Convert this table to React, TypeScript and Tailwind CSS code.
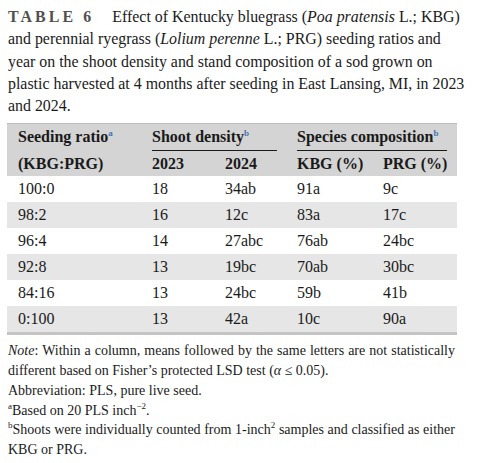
import React from "react";

const rows = [
  ["100:0", "18", "34ab", "91a", "9c"],
  ["98:2", "16", "12c", "83a", "17c"],
  ["96:4", "14", "27abc", "76ab", "24bc"],
  ["92:8", "13", "19bc", "70ab", "30bc"],
  ["84:16", "13", "24bc", "59b", "41b"],
  ["0:100", "13", "42a", "10c", "90a"],
];

const sup = "text-[9px] leading-none align-[6px]";

export default function App() {
  return (
    <div
      className="w-[477px] h-[463px] bg-white text-[#1a1a1a] overflow-hidden"
      style={{ fontFamily: '"Liberation Serif", "Times New Roman", serif' }}
    >
      <div className="pl-[8px] pt-[6px] text-[15.9px] leading-[22.3px] whitespace-nowrap">
        <div>
          <span className="font-bold tracking-[3.1px] text-[#505050]">TABLE 6</span>
          <span className="inline-block w-[18px]"></span>
          Effect of Kentucky bluegrass (<i>Poa pratensis</i> L.; KBG)
        </div>
        <div>
          and perennial ryegrass (<i>Lolium perenne</i> L.; PRG) seeding ratios and
        </div>
        <div>year on the shoot density and stand composition of a sod grown on</div>
        <div>plastic harvested at 4 months after seeding in East Lansing, MI, in 2023</div>
        <div>and 2024.</div>
      </div>

      <div className="ml-[7px] mt-[6px] w-[450px] text-[16px]">
        <div className="bg-[#d4d4d4] border-t border-[#bdbdbd] font-bold">
          <div className="grid grid-cols-[145px_73px_72px_86px_1fr] h-[27px] items-end">
            <div className="pl-[11px] pb-[2px]">
              Seeding ratio<span className={sup + " text-[#4a74b5]"}>a</span>
            </div>
            <div className="col-span-2 pr-[20px] h-full flex flex-col justify-end">
              <div className="pb-[1px]">
                Shoot density<span className={sup + " text-[#4a74b5]"}>b</span>
              </div>
              <div className="h-[1px] bg-[#1a1a1a]"></div>
            </div>
            <div className="col-span-2 pr-[10px] h-full flex flex-col justify-end">
              <div className="pb-[1px]">
                Species composition<span className={sup + " text-[#4a74b5]"}>b</span>
              </div>
              <div className="h-[1px] bg-[#1a1a1a]"></div>
            </div>
          </div>
          <div className="grid grid-cols-[145px_73px_72px_86px_1fr] h-[25px] items-center">
            <div className="pl-[11px]">(KBG:PRG)</div>
            <div>2023</div>
            <div>2024</div>
            <div>KBG (%)</div>
            <div>PRG (%)</div>
          </div>
        </div>
        {rows.map((r, i) => (
          <div
            key={i}
            className={
              "grid grid-cols-[145px_73px_72px_86px_1fr] h-[26px] items-center " +
              (i % 2 === 1 ? "bg-[#e6e6e6]" : "bg-white")
            }
          >
            <div className="pl-[11px]">{r[0]}</div>
            <div>{r[1]}</div>
            <div>{r[2]}</div>
            <div>{r[3]}</div>
            <div>{r[4]}</div>
          </div>
        ))}
        <div className="h-[3px] bg-[#c4c4c4]"></div>
      </div>

      <div className="ml-[8px] w-[447px] pt-[6px] text-[14px] leading-[19.7px] whitespace-nowrap">
        <div className="text-justify [text-align-last:justify]">
          <i>Note</i>: Within a column, means followed by the same letters are not statistically
        </div>
        <div>
          different based on Fisher’s protected LSD test (<i>α</i> ≤ 0.05).
        </div>
        <div>Abbreviation: PLS, pure live seed.</div>
        <div>
          <span className={sup}>a</span>Based on 20 PLS inch<span className={sup}>−2</span>.
        </div>
        <div className="text-justify [text-align-last:justify]">
          <span className={sup}>b</span>Shoots were individually counted from 1-inch
          <span className={sup}>2</span> samples and classified as either
        </div>
        <div>KBG or PRG.</div>
      </div>
    </div>
  );
}
